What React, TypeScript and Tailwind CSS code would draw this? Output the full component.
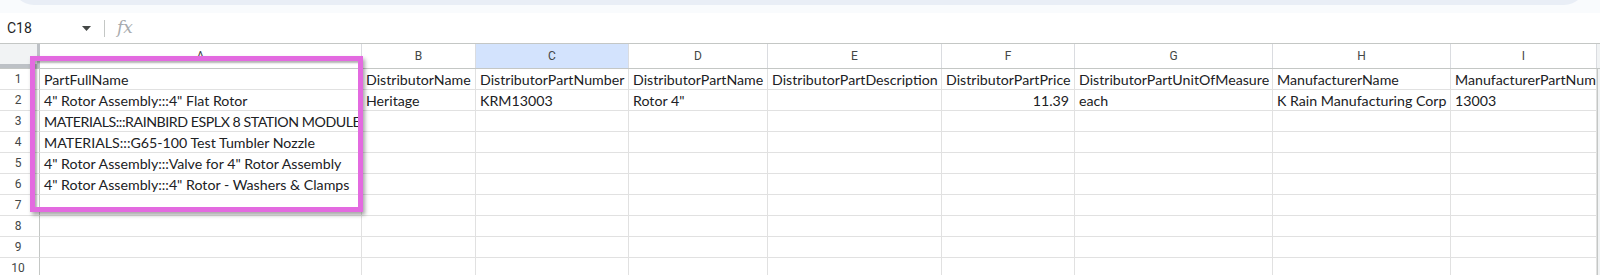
import React from "react";

const COLS = [
  { letter: "A", w: "w-[322px]" },
  { letter: "B", w: "w-[114px]" },
  { letter: "C", w: "w-[153px]" },
  { letter: "D", w: "w-[139px]" },
  { letter: "E", w: "w-[174px]" },
  { letter: "F", w: "w-[133px]" },
  { letter: "G", w: "w-[198px]" },
  { letter: "H", w: "w-[178px]" },
  { letter: "I", w: "w-[146px]" },
];

const ROWS: string[][] = [
  [
    "PartFullName",
    "DistributorName",
    "DistributorPartNumber",
    "DistributorPartName",
    "DistributorPartDescription",
    "DistributorPartPrice",
    "DistributorPartUnitOfMeasure",
    "ManufacturerName",
    "ManufacturerPartNum",
  ],
  [
    '4" Rotor Assembly:::4" Flat Rotor',
    "Heritage",
    "KRM13003",
    'Rotor 4"',
    "",
    "11.39",
    "each",
    "K Rain Manufacturing Corp",
    "13003",
  ],
  ["MATERIALS:::RAINBIRD ESPLX 8 STATION MODULE"],
  ["MATERIALS:::G65-100 Test Tumbler Nozzle"],
  ['4" Rotor Assembly:::Valve for 4" Rotor Assembly'],
  ['4" Rotor Assembly:::4" Rotor - Washers & Clamps'],
  [],
  [],
  [],
  [],
];

function isNumber(v: string) {
  return /^[0-9.]+$/.test(v) && v.includes(".");
}

// all-caps text in Lato runs wider than the sheet's Calibri, so tighten it
function isCaps(v: string) {
  return v.length > 20 && v === v.toUpperCase();
}

function TopStrip() {
  return (
    <div className="h-[13px] bg-[#f9fbfd] overflow-hidden">
      <div className="ml-[12px] -mt-[20px] h-[25px] w-[1574px] rounded-b-[22px] bg-[#e9eef6]" />
    </div>
  );
}

function FormulaBar() {
  return (
    <div className="flex h-[30px] items-center bg-white font-['Roboto',sans-serif]">
      <div className="flex w-[100px] items-center justify-between pl-[7px] pr-[9px]">
        <span className="text-[14px] text-[#1f1f1f]">C18</span>
        <svg width="9" height="5" viewBox="0 0 9 5" className="mt-[1px]">
          <path d="M0 0h9L4.5 5z" fill="#444746" />
        </svg>
      </div>
      <div className="ml-[4px] h-[17px] w-px bg-[#c4c7c5]" />
      <span className="ml-[12px] font-['DejaVu_Serif',serif] text-[17px] italic text-[#a8abae]">fx</span>
    </div>
  );
}

function HeaderRow() {
  return (
    <div className="flex h-[26px] border-y border-[#c4c7c5] bg-white text-[12px] text-[#444746] font-['Roboto',sans-serif]">
      <div className="w-[40px] shrink-0 flex">
        <div className="flex-1 bg-[#f1f3f4] border-b-[4px] border-[#bdc1c6]" />
        <div className="w-[3px] bg-[#bdc1c6]" />
      </div>
      {COLS.map((c) => (
        <div
          key={c.letter}
          className={`${c.w} shrink-0 flex items-center justify-center border-r border-[#dadce0] ${
            c.letter === "C" ? "bg-[#d3e3fd]" : ""
          }`}
        >
          {c.letter}
        </div>
      ))}
      <div className="flex-1 bg-[#f1f3f4]" />
    </div>
  );
}

function DataRow({ n, cells }: { n: number; cells: string[] }) {
  return (
    <div className="flex h-[21px]">
      <div className="w-[40px] shrink-0 flex items-center justify-center border-b border-r border-[#e1e1e1] border-r-[#c4c7c5] pr-[3px] text-[12px] text-[#444746] font-['Roboto',sans-serif]">
        {n}
      </div>
      {COLS.map((c, i) => {
        const v = cells[i] ?? "";
        return (
          <div
            key={c.letter}
            className={`${c.w} shrink-0 flex items-end overflow-hidden whitespace-nowrap border-b border-r border-[#e1e1e1] px-[4px] text-[14.2px] leading-[18px] text-[#202124] font-['Lato',sans-serif] ${
              isNumber(v) ? "justify-end pr-[5px]" : ""
            } ${isCaps(v) ? "tracking-[-0.45px]" : ""}`}
          >
            {v}
          </div>
        );
      })}
      <div className="flex-1 border-l border-[#c4c7c5] bg-[#f1f3f4]" />
    </div>
  );
}

export default function App() {
  return (
    <div className="relative h-[275px] w-[1600px] overflow-hidden bg-white">
      <TopStrip />
      <FormulaBar />
      <HeaderRow />
      {ROWS.map((cells, i) => (
        <DataRow key={i} n={i + 1} cells={cells} />
      ))}
      <div className="pointer-events-none absolute left-[30px] top-[56px] h-[156px] w-[333px] border-[5px] border-[#e36ae0] shadow-[2px_3px_4px_rgba(0,0,0,0.35),inset_2px_2px_2px_rgba(0,0,0,0.3)]" />
    </div>
  );
}
